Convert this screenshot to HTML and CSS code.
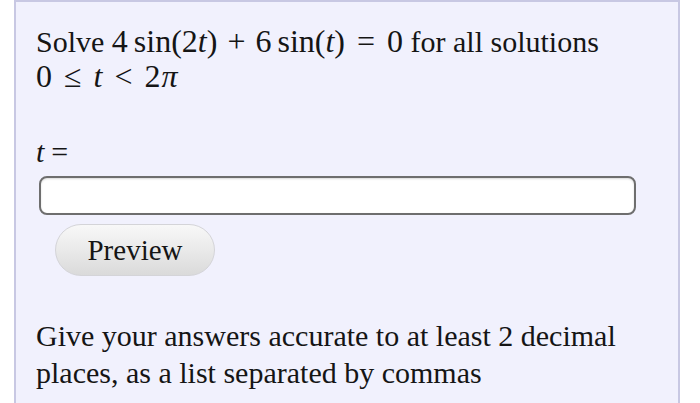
FILE: index.html
```html
<!DOCTYPE html>
<html>
<head>
<meta charset="utf-8">
<link rel="stylesheet" href="styles.css">
</head>
<body>
<div class="panel">
  <p class="question">Solve <span class="m">4<span class="op">sin</span>(2<i>t</i>)<span class="bin">+</span>6<span class="op">sin</span>(<i>t</i>)<span class="rel">=</span>0</span> for all solutions<br><span class="m">0<span class="rel">≤</span><i>t</i><span class="rel">&lt;</span>2<i class="pi">π</i></span></p>
  <div class="label"><i>t</i><span class="eq">=</span></div>
  <div class="answer"></div>
  <div class="btnrow"><span class="preview">Preview</span></div>
  <p class="note">Give your answers accurate to at least 2 decimal places, as a list separated by commas</p>
</div>
</body>
</html>
```
FILE: styles.css
```css
html, body {
  margin: 0;
  padding: 0;
  background: #ffffff;
  height: 100%;
  overflow: hidden;
}
body {
  font-family: "Liberation Serif", "Times New Roman", serif;
  color: #151515;
}
.panel {
  margin-left: 14px;
  width: 666px;
  height: 420px;
  background: #f1f1fd;
  border: 2px solid #c8c8e3;
  border-bottom: none;
  padding: 0 20px;
  box-sizing: border-box;
}
.question {
  margin: 0;
  padding-top: 22px;
  font-size: 30px;
  line-height: 35px;
}
.m { font-size: 32px; }
.m i { font-style: italic; }
.m .pi { margin-left: 1px; }
.op { margin-left: 6px; }
.bin { margin: 0 10px; }
.rel { margin: 0 12px; }
.label {
  margin-top: 43px;
  font-size: 30px;
  line-height: 29px;
}
.label .eq { margin-left: 7px; }
.answer {
  margin-top: 10px;
  margin-left: 3px;
  width: 597px;
  height: 39px;
  box-sizing: border-box;
  background: #ffffff;
  border: 2px solid #6e6e6e;
  border-radius: 8px;
  box-shadow: inset 0 1px 2px rgba(0,0,0,0.15);
}
.btnrow {
  display: flex;
  margin-top: 9px;
  padding-left: 19px;
}
.preview {
  width: 160px;
  height: 52px;
  box-sizing: border-box;
  border: 1px solid #d4d4d8;
  border-radius: 26px;
  background: linear-gradient(#f8f8f8, #e8e8e8 55%, #dadada);
  text-align: center;
  font-size: 29px;
  line-height: 50px;
  color: #151515;
}
.note {
  margin: 41px 0 0;
  font-size: 30px;
  line-height: 37px;
}
```
